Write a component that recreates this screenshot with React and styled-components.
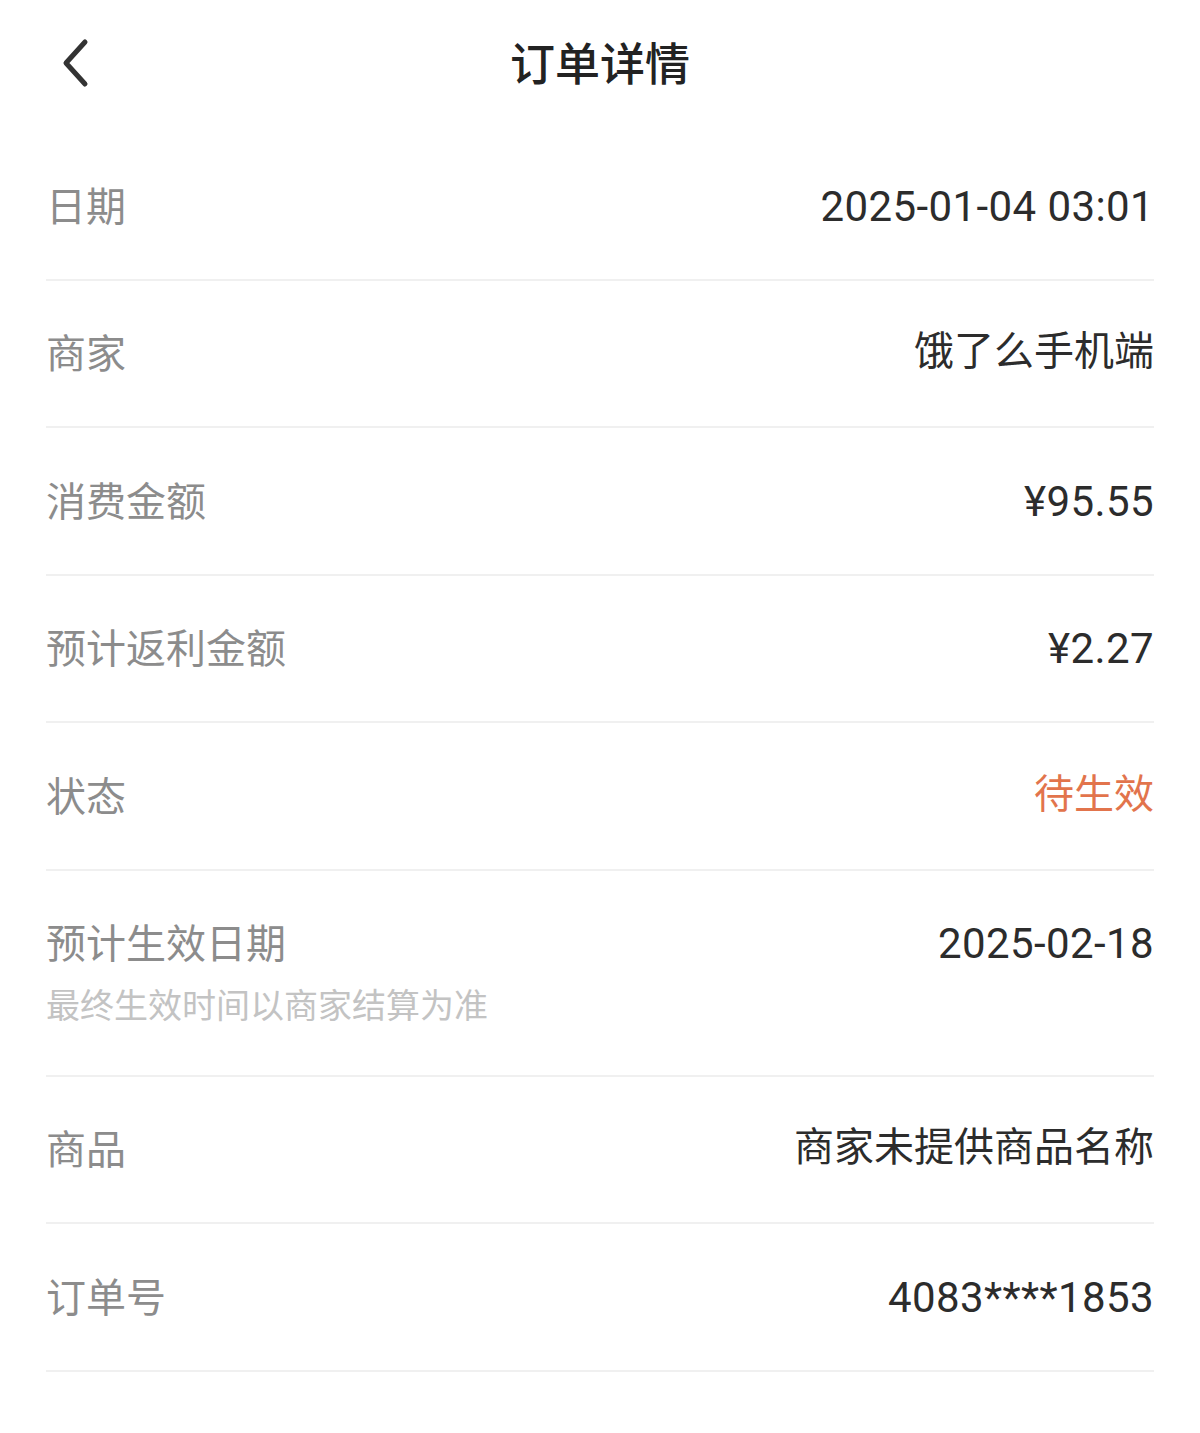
import React from "react";
import styled, { createGlobalStyle } from "styled-components";

const Global = createGlobalStyle`
  html, body { margin: 0; padding: 0; background: #fff; }
  body { font-family: Roboto, "Noto Sans CJK SC", sans-serif; -webkit-font-smoothing: antialiased; }
`;

const Page = styled.div`
  width: 1200px;
  min-height: 1433px;
  background: #fff;
  box-sizing: border-box;
`;

const Header = styled.header`
  position: relative;
  height: 133px;
  display: flex;
  justify-content: center;
  padding-top: 32px;
  box-sizing: border-box;
`;

const BackButton = styled.button`
  position: absolute;
  left: 56px;
  top: 36px;
  width: 40px;
  height: 54px;
  padding: 0;
  border: none;
  background: transparent;
  display: flex;
  align-items: center;
  justify-content: center;
`;

const Title = styled.h1`
  margin: 0;
  font-family: "Noto Sans CJK SC", sans-serif;
  font-size: 45px;
  line-height: 60px;
  font-weight: 500;
  color: #222;
`;

const List = styled.div`
  padding: 0 46px;
  display: flex;
  flex-direction: column;
`;

const Row = styled.div`
  display: flex;
  justify-content: space-between;
  align-items: ${(p) => (p.$tall ? "flex-start" : "center")};
  box-sizing: border-box;
  height: ${(p) => (p.$tall ? "206px" : "147.5px")};
  padding-top: ${(p) => (p.$tall ? "44px" : "0")};
  border-bottom: 2px solid #f0f0f0;
`;

const LabelBlock = styled.div`
  display: flex;
  flex-direction: column;
`;

const Label = styled.span`
  font-family: "Noto Sans CJK SC", sans-serif;
  font-size: 40px;
  line-height: 56px;
  color: #8c8c8c;
  transform: translateY(-2px);
`;

const Note = styled.span`
  margin-top: 9px;
  font-family: "Noto Sans CJK SC", sans-serif;
  font-size: 34px;
  line-height: 48px;
  color: #c3c3c3;
`;

const Value = styled.span`
  font-family: Roboto, "Noto Sans CJK SC", sans-serif;
  font-size: ${(p) => (p.$num ? "42px" : "40px")};
  line-height: 56px;
  color: ${(p) => (p.$accent ? "#e2744c" : "#2c2c2c")};
  letter-spacing: ${(p) => (p.$num ? "0.4px" : "0")};
  transform: translateY(${(p) => (p.$num ? "1px" : "-1px")});
`;

const rows = [
  { label: "日期", value: "2025-01-04 03:01", num: true },
  { label: "商家", value: "饿了么手机端" },
  { label: "消费金额", value: "¥95.55", num: true },
  { label: "预计返利金额", value: "¥2.27", num: true },
  { label: "状态", value: "待生效", accent: true },
  { label: "预计生效日期", value: "2025-02-18", num: true, note: "最终生效时间以商家结算为准" },
  { label: "商品", value: "商家未提供商品名称" },
  { label: "订单号", value: "4083****1853", num: true },
];

export default function App() {
  return (
    <Page>
      <Global />
      <Header>
        <BackButton aria-label="返回">
          <svg width="30" height="50" viewBox="0 0 30 50" fill="none">
            <path d="M24 4 L5 25 L24 46" stroke="#333" strokeWidth="5" strokeLinecap="round" strokeLinejoin="round" />
          </svg>
        </BackButton>
        <Title>订单详情</Title>
      </Header>
      <List>
        {rows.map((r) => (
          <Row key={r.label} $tall={!!r.note}>
            <LabelBlock>
              <Label>{r.label}</Label>
              {r.note && <Note>{r.note}</Note>}
            </LabelBlock>
            <Value $accent={r.accent} $num={r.num}>{r.value}</Value>
          </Row>
        ))}
      </List>
    </Page>
  );
}
